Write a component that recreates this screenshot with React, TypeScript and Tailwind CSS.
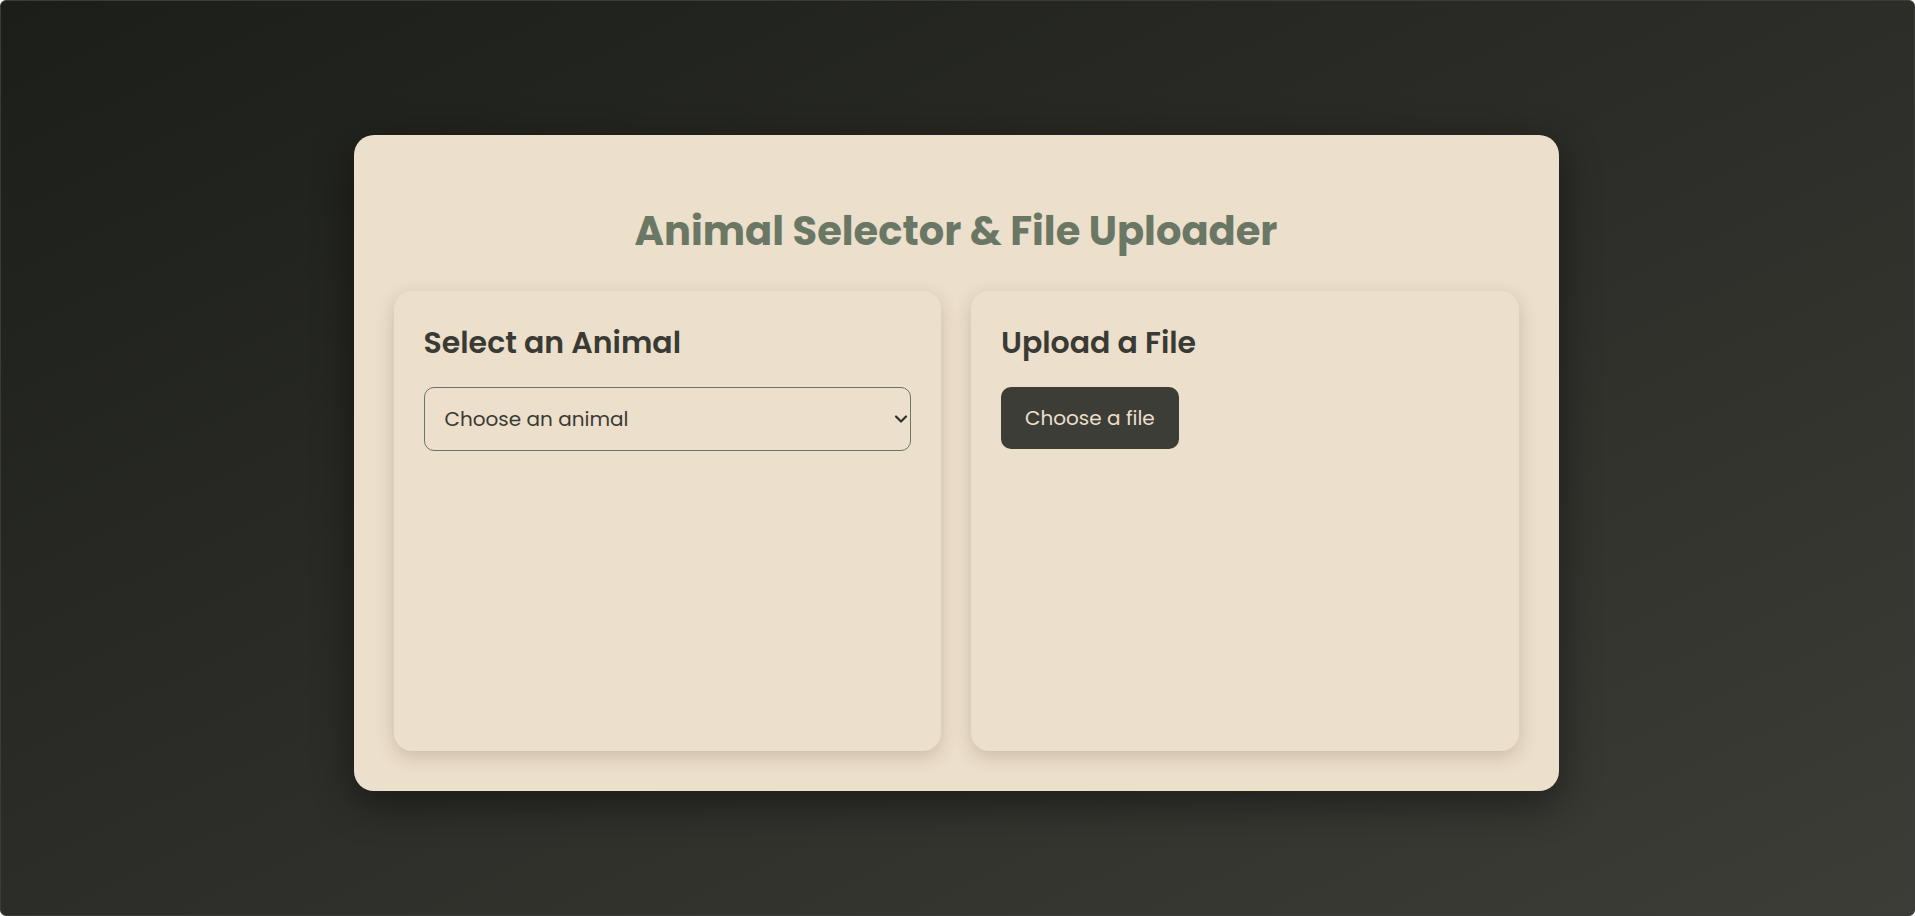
import { useState } from "react";
import { ChevronDown } from "lucide-react";

const font = { fontFamily: '"Poppins", "Open Sans", "Noto Sans", sans-serif' };

export default function App() {
  const [animal, setAnimal] = useState("");
  const [fileName, setFileName] = useState<string | null>(null);

  return (
    <div
      style={font}
      className="h-screen w-full overflow-hidden rounded-md border border-[#3b3c38] bg-linear-to-br from-[#1c1e19] to-[#3d3d37] pt-[134px] pr-[3px]"
    >
      <div className="mx-auto w-[1205px] rounded-[20px] bg-[#ecdfcb] px-10 pt-[72px] pb-10 shadow-[0_12px_40px_rgba(0,0,0,0.45)]">
        <h1 className="mb-[36px] text-center text-[40px] leading-[48px] font-bold text-[#6b7765]">
          Animal Selector &amp; File Uploader
        </h1>

        <div className="grid grid-cols-2 gap-[30px]">
          <div className="h-[460px] rounded-[18px] bg-[#ecdfcb] px-[30px] pt-[30px] shadow-[0_6px_18px_rgba(90,70,40,0.22)]">
            <h2 className="mb-[22px] text-[30px] leading-[44px] font-semibold text-[#3a3a34]">
              Select an Animal
            </h2>
            <div className="relative">
              <select
                value={animal}
                onChange={(e) => setAnimal(e.target.value)}
                className="h-[64px] w-full appearance-none rounded-[10px] border border-[#6b7565] bg-transparent px-5 text-[20px] text-[#3a3a34] outline-none"
              >
                <option value="">Choose an animal</option>
                <option value="cat">Cat</option>
                <option value="dog">Dog</option>
                <option value="elephant">Elephant</option>
              </select>
              <ChevronDown
                size={20}
                strokeWidth={2.6}
                className="pointer-events-none absolute top-1/2 right-0 -translate-y-1/2 text-[#2f2f2b]"
              />
            </div>
          </div>

          <div className="h-[460px] rounded-[18px] bg-[#ecdfcb] px-[30px] pt-[30px] shadow-[0_6px_18px_rgba(90,70,40,0.22)]">
            <h2 className="mb-[22px] text-[30px] leading-[44px] font-semibold text-[#3a3a34]">
              Upload a File
            </h2>
            <label className="inline-flex h-[62px] cursor-pointer items-center rounded-[10px] bg-[#3d3d37] px-6 text-[20px] text-[#ecdfcb]">
              Choose a file
              <input
                type="file"
                className="hidden"
                onChange={(e) => setFileName(e.target.files?.[0]?.name ?? null)}
              />
            </label>
            {fileName && (
              <p className="mt-4 text-[16px] text-[#3a3a34]">{fileName}</p>
            )}
          </div>
        </div>
      </div>
    </div>
  );
}
